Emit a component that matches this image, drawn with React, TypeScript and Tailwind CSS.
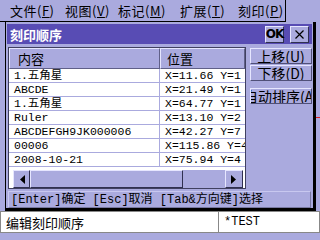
import React from 'react';

const sans = "font-['Noto_Sans_CJK_SC','Noto_Sans',sans-serif]";
const mono = "font-['Liberation_Mono','Noto_Sans_CJK_SC',monospace]";

const rows = [
  ['1.五角星', 'X=11.66 Y=1'],
  ['ABCDE', 'X=21.49 Y=1'],
  ['1.五角星', 'X=64.77 Y=1'],
  ['Ruler', 'X=13.10 Y=2'],
  ['ABCDEFGH9JK000006', 'X=42.27 Y=7'],
  ['00006', 'X=115.86 Y=4'],
  ['2008-10-21', 'X=75.94 Y=4'],
];

// menu entries with the width each one takes in the bar
const menu = [
  { label: '文件', hot: 'F', w: 'w-[55px]' },
  { label: '视图', hot: 'V', w: 'w-[53px]' },
  { label: '标记', hot: 'M', w: 'w-[62px]' },
  { label: '扩展', hot: 'T', w: 'w-[58px]' },
  { label: '刻印', hot: 'P', w: 'w-[46px]' },
];

function SideButton({ label, hot }: { label: string; hot: string }) {
  return (
    <div className="h-[16px] w-[62px] flex justify-center items-center overflow-hidden whitespace-nowrap border border-t-[#e6e6ff] border-l-[#e6e6ff] border-b-[#505078] border-r-[#505078] bg-[#aaaade] text-[14px] leading-none text-black">
      <span className="shrink-0">
        {label}(<span className="underline">{hot}</span>)
      </span>
    </div>
  );
}

export default function App() {
  return (
    <div className={`relative w-[320px] h-[240px] overflow-hidden bg-[#aaaade] ${sans} text-black`}>
      {/* menu bar */}
      <div className="h-[22px] w-[286px] border-r border-b border-black flex items-center pl-[10px] text-[13px] tracking-[0.5px] leading-none">
        {menu.map((m) => (
          <span key={m.hot} className={`${m.w} shrink-0 whitespace-nowrap`}>
            {m.label}(<span className="underline">{m.hot}</span>)
          </span>
        ))}
      </div>

      {/* dialog */}
      <div className="ml-[5px] w-[311px] h-[189px] border-l border-black border-r-[3px] border-b-[3px] flex flex-col px-[1px] pt-[2px]">
        <div className="h-[20px] bg-[#584cb4] flex items-center justify-between pl-[3px] pr-[3px]">
          <span className="text-white font-bold text-[13px] leading-none">刻印顺序</span>
          <div className="flex gap-[6px]">
            <div className="w-[19px] h-[17px] flex items-center justify-center bg-[#aaaade] border border-t-[#e6e6ff] border-l-[#e6e6ff] border-b-[#303050] border-r-[#303050] font-['DejaVu_Sans',sans-serif] font-bold text-[12px] leading-none tracking-[-1px]">
              OK
            </div>
            <div className="w-[19px] h-[17px] flex items-center justify-center bg-[#aaaade] border border-t-[#e6e6ff] border-l-[#e6e6ff] border-b-[#303050] border-r-[#303050]">
              <svg width="9" height="9" viewBox="0 0 9 9">
                <path d="M0.5 0.5 L8.5 8.5 M8.5 0.5 L0.5 8.5" stroke="black" strokeWidth="1.2" />
              </svg>
            </div>
          </div>
        </div>

        <div className="mt-[3px] flex gap-[4px]">
          {/* list view */}
          <div className="ml-[1px] w-[238px] h-[142px] border border-[#404060] bg-white flex flex-col">
            <div className="h-[21px] flex text-[13px] leading-none">
              <div className="w-[151px] flex items-center pl-[8px] bg-[#aaaade] border border-t-[#e6e6ff] border-l-[#e6e6ff] border-b-[#606088] border-r-[#606088]">
                内容
              </div>
              <div className="flex-1 flex items-center pl-[6px] bg-[#aaaade] border border-t-[#e6e6ff] border-l-[#e6e6ff] border-b-[#606088] border-r-[#606088]">
                位置
              </div>
            </div>
            {rows.map(([name, pos], i) => (
              <div key={i} className={`h-[14px] flex border-b border-[#aaaade] ${mono} text-[11.5px] leading-none`}>
                <div className="w-[151px] flex items-center pl-[5px] border-r border-[#aaaade] whitespace-nowrap">
                  {name}
                </div>
                <div className="flex-1 flex items-center pl-[5px] whitespace-nowrap overflow-hidden">
                  {pos}
                </div>
              </div>
            ))}
            <div className="h-[3px]" />
            {/* horizontal scrollbar */}
            <div className="h-[18px] flex pl-[4px] pr-[2px]">
              <div className="w-[17px] flex items-center justify-center bg-[#aaaade] border border-t-[#e6e6ff] border-l-[#e6e6ff] border-b-[#303050] border-r-[#303050]">
                <svg width="6" height="9" viewBox="0 0 6 9">
                  <polygon points="6,0 6,9 1,4.5" fill="black" />
                </svg>
              </div>
              <div className="w-[153px] bg-[#aaaade] border border-t-[#e6e6ff] border-l-[#e6e6ff] border-b-[#303050] border-r-[#303050]" />
              <div className="flex-1 bg-[#aaaade]" />
              <div className="w-[18px] flex items-center justify-center bg-[#aaaade] border border-t-[#e6e6ff] border-l-[#e6e6ff] border-b-[#303050] border-r-[#303050]">
                <svg width="6" height="9" viewBox="0 0 6 9">
                  <polygon points="0,0 0,9 5,4.5" fill="black" />
                </svg>
              </div>
            </div>
          </div>

          {/* side buttons */}
          <div className="flex flex-col pt-[1px]">
            <SideButton label="上移" hot="U" />
            <div className="h-[1px]" />
            <SideButton label="下移" hot="D" />
            <div className="h-[7px]" />
            <SideButton label="自动排序" hot="A" />
          </div>
        </div>

        {/* hint line */}
        <div className={`mt-[2px] ml-[1px] mr-[1px] h-[17px] flex items-center pl-[2px] border border-t-[#c8c8f0] border-l-[#c8c8f0] border-b-[#7878a0] border-r-[#7878a0] ${mono} text-[12px] leading-none whitespace-nowrap`}>
          [Enter]确定 [Esc]取消 [Tab&amp;方向键]选择
        </div>
      </div>

      {/* status bar */}
      <div className="h-[22px] flex bg-white border border-[#888888]">
        <div className="w-[218px] flex items-center pl-[5px] border-r border-[#888888] text-[13px] leading-none">
          编辑刻印顺序
        </div>
        <div className={`flex-1 flex items-center pl-[5px] ${mono} text-[12px] leading-none`}>*TEST</div>
      </div>

      {/* bit of the drawing behind the dialog */}
      <div className="absolute left-[316px] top-[117px] w-[4px] h-[1px] bg-[#e02020]" />
    </div>
  );
}
